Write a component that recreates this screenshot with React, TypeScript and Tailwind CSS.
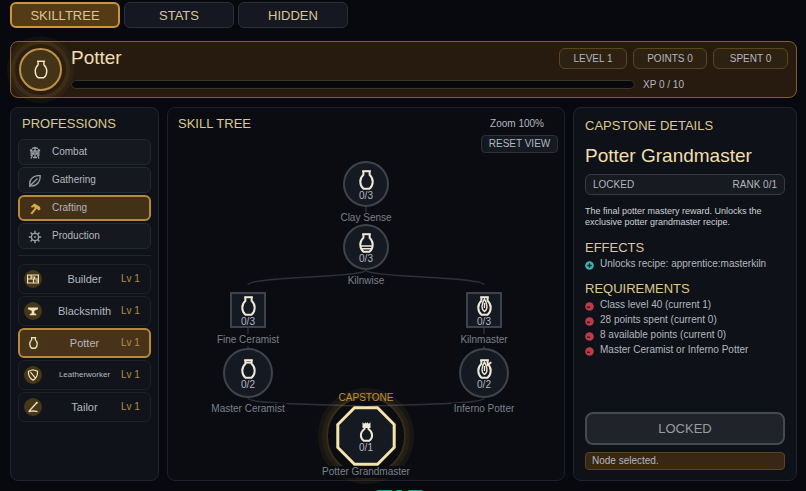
import { useState } from 'react'
import type { ReactNode } from 'react'

type SkillNode = {
  id: string
  name: string
  rank: string
  x: number
  y: number
  size: number
  labelY: number
  shape: 'circle' | 'square' | 'octagon'
  variant: JarVariant
}

type JarVariant = 'plain' | 'band' | 'flame' | 'lid' | 'inferno' | 'crown'

const tabs = ['SKILLTREE', 'STATS', 'HIDDEN']

const categories = ['Combat', 'Gathering', 'Crafting', 'Production']

const jobs = ['Builder', 'Blacksmith', 'Potter', 'Leatherworker', 'Tailor']

const requirements = [
  'Class level 40 (current 1)',
  '28 points spent (current 0)',
  '8 available points (current 0)',
  'Master Ceramist or Inferno Potter'
]

// Positions are relative to the 396x372 tree canvas
const nodes: SkillNode[] = [
  { id: 'clay', name: 'Clay Sense', rank: '0/3', x: 198, y: 76, size: 46, labelY: 110, shape: 'circle', variant: 'plain' },
  { id: 'kiln', name: 'Kilnwise', rank: '0/3', x: 198, y: 139, size: 46, labelY: 173, shape: 'circle', variant: 'band' },
  { id: 'fine', name: 'Fine Ceramist', rank: '0/3', x: 80, y: 202, size: 36, labelY: 232, shape: 'square', variant: 'plain' },
  { id: 'kilnmaster', name: 'Kilnmaster', rank: '0/3', x: 316, y: 202, size: 36, labelY: 232, shape: 'square', variant: 'flame' },
  { id: 'master', name: 'Master Ceramist', rank: '0/2', x: 80, y: 265, size: 50, labelY: 301, shape: 'circle', variant: 'lid' },
  { id: 'inferno', name: 'Inferno Potter', rank: '0/2', x: 316, y: 265, size: 50, labelY: 301, shape: 'circle', variant: 'inferno' },
  { id: 'grand', name: 'Potter Grandmaster', rank: '0/1', x: 198, y: 328, size: 60, labelY: 364, shape: 'octagon', variant: 'crown' }
]

function Jar({ variant = 'plain', className, stroke = 2 }: { variant?: JarVariant; className: string; stroke?: number }) {
  return (
    <svg viewBox="0 0 15 20" className={className} fill="none" stroke="currentColor" strokeWidth={stroke} aria-hidden="true">
      {variant === 'crown' ? (
        <>
          <path d="M3.500 6V.3l1.700 1.500L6.500.3l1 1.300 1-1.300 1.300 1.500L11.500.3V6z" fill="currentColor" stroke="none" />
          <path d="M5.500 5.500v1.500C3 8.700 1.900 11 1.900 13.300c0 2.200 1 4.200 2.800 5.500h5.600c1.800-1.300 2.800-3.300 2.800-5.500 0-2.300-1.100-4.600-3.600-6.300V5.500" />
        </>
      ) : (
        <>
          <path d="M3.200 1.200h8.600" />
          <path d="M4.400 1.200v3.600C2.500 6.500 1.300 9 1.300 11.800c0 3 1.200 5.400 3.200 7h6c2-1.600 3.200-4 3.200-7 0-2.800-1.200-5.300-3.100-7V1.200" />
        </>
      )}
      {variant === 'band' && <path d="M1.500 13h12M2.500 15.800h10" strokeWidth="1.500" />}
      {variant === 'lid' && <path d="M4 3.600h7" />}
      {(variant === 'flame' || variant === 'inferno') && (
        <path d="M7.500 3C5.700 5.800 5 8 5 10.500c0 2.200.9 4 2.500 5 1.600-1 2.500-2.800 2.500-5C10 8 9.300 5.800 7.500 3zM7.500 7v5" strokeWidth="1.400" />
      )}
      {variant === 'inferno' && <path d="M9.800 6.800 14.300 3.200" strokeWidth="1.800" />}
    </svg>
  )
}

const categoryIcons: Record<string, ReactNode> = {
  Combat: (
    <svg viewBox="0 0 14 14" className="size-3.5" fill="none" stroke="currentColor" strokeWidth="1.300" aria-hidden="true">
      <path d="M4 2.700 7 1.500l3 1.200M3.200 3v7M10.800 3v7M3.200 5.200h7.600M7 2v9M4.500 9.200 3 12.500M9.500 9.200l1.500 3.300M5 11.500h4M2 4l1.500 1.500M12 4l-1.500 1.500" />
      <path d="M4 6.300h2.200v2.500H4zM7.800 6.300H10v2.500H7.800z" fill="currentColor" stroke="none" />
    </svg>
  ),
  Gathering: (
    <svg viewBox="0 0 14 14" className="size-3.5" fill="none" stroke="currentColor" strokeWidth="1.300" strokeLinejoin="round" aria-hidden="true">
      <path d="M12.300 1.700C8.800 1.200 5.300 2.500 3.200 5.100 1.700 7 1.400 9.300 2.100 11.700c3 .5 5.900-.3 7.900-2.700 1.700-2 2.300-4.600 2.300-7.300z" />
      <path d="M1.300 12.700 4.300 9.500 9.500 4.500" />
    </svg>
  ),
  Crafting: (
    <svg viewBox="0 0 14 14" className="size-3.5" fill="currentColor" aria-hidden="true">
      <path d="M2.800 4.600 6.300 1.500l1.900 1L12 4.800l.5 2.700-1.800.9L8.800 6.800 4 12.500 2.400 11.300 6.800 5.900 5.700 4.800l-1.700.9z" />
    </svg>
  ),
  Production: (
    <svg viewBox="0 0 14 14" className="size-3.5" fill="none" stroke="currentColor" strokeWidth="1.400" aria-hidden="true">
      <circle cx="7" cy="7" r="3.600" />
      <circle cx="7" cy="7" r=".9" fill="currentColor" stroke="none" />
      <path d="M7 .8v2.600M7 10.600v2.600M.8 7h2.600M10.600 7h2.600M2.600 2.600l1.800 1.800M9.600 9.600l1.800 1.800M11.400 2.600 9.600 4.400M4.400 9.600l-1.800 1.800" />
    </svg>
  )
}

const jobIcons: Record<string, ReactNode> = {
  Builder: (
    <svg viewBox="0 0 12 12" className="size-3" fill="none" stroke="currentColor" strokeWidth="1.200" aria-hidden="true">
      <path d="M.6 2h10.800v8H.6zM.6 6h10.800M4 2v4M7.500 4v2M4 4h4.500M6.500 6v4M8.500 8h3" />
    </svg>
  ),
  Blacksmith: (
    <svg viewBox="0 0 12 12" className="size-3" fill="currentColor" aria-hidden="true">
      <path d="M1 2.500h10v1.800L7.300 5.800v2.400l1.900.8v1.200H2.800V9l1.900-.8V5.800L1 4.300z" />
    </svg>
  ),
  Potter: <Jar className="h-3 w-[9px]" stroke={2.2} />,
  Leatherworker: (
    <svg viewBox="0 0 12 12" className="size-3" fill="none" stroke="currentColor" strokeWidth="1.200" aria-hidden="true">
      <path d="M1.500 2.200 6 .8l4.500 1.400c.3 3.800-.9 6.800-4.500 9.100C2.400 9 1.200 6 1.500 2.200zM3.500 3.200l5 6" />
    </svg>
  ),
  Tailor: (
    <svg viewBox="0 0 12 12" className="size-3" fill="none" stroke="currentColor" strokeWidth="1.300" aria-hidden="true">
      <path d="M9.500 2 2 10.200M1.500 10.600l5-.8 4 .8" />
      <circle cx="9.800" cy="1.800" r="1" fill="currentColor" stroke="none" />
    </svg>
  )
}

function NodeShape({ shape }: { shape: SkillNode['shape'] }) {
  if (shape === 'octagon') {
    return (
      <svg viewBox="0 0 60 60" className="absolute inset-0 size-full" aria-hidden="true">
        <path d="M18.500 1.800h23l16.700 16.700v23L41.500 58.200h-23L1.800 41.500v-23z" fill="#151922" stroke="#f5e3a9" strokeWidth="3" />
      </svg>
    )
  }
  if (shape === 'square') return <span className="absolute inset-0 border-2 border-[#3d424c] bg-[#151922]" />
  return <span className="absolute inset-0 rounded-full border-2 border-[#3f434c] bg-[#151922]" />
}

export default function App() {
  const [tab, setTab] = useState('SKILLTREE')
  const [category, setCategory] = useState('Crafting')
  const [job, setJob] = useState('Potter')

  return (
    <div className="relative flex min-h-screen flex-col overflow-hidden bg-[#07090e] pt-0.5 pr-[9px] pb-2.5 pl-2.5 font-['Liberation_Sans',Arial,sans-serif] text-[10px] leading-3 text-[#b4b7bf]">
      <nav className="flex gap-1">
        {tabs.map(t => (
          <button
            key={t}
            onClick={() => setTab(t)}
            className={`h-[26px] w-[110px] rounded-md pt-0.5 text-[13px] text-[#d8c795] ${
              tab === t ? 'border-2 border-[#c9973a] bg-[#543a15]' : 'border border-[#2b2f38] bg-[#151820]'
            }`}
          >
            {t}
          </button>
        ))}
      </nav>

      {/* Current profession */}
      <header className="relative mt-[13px] flex h-[57px] items-center gap-[9px] rounded-lg border border-[#7d602c] bg-[#271b0f] px-2">
        <div className="flex size-[43px] shrink-0 items-center justify-center rounded-full border-2 border-[#bd9349] bg-[#433317] text-[#f3ead0] shadow-[0_0_0_4px_#2b1e10,0_0_0_8px_#b48c3c1c,0_0_0_12px_#b48c3c10]">
          <Jar className="h-[19px] w-3.5" stroke={1.5} />
        </div>
        <div className="flex-1">
          <div className="flex h-[21px] items-center justify-between">
            <h1 className="-mt-0.5 text-[19px] leading-5 text-[#f0dfb0]">Potter</h1>
            <div className="flex gap-1.5">
              <span className="flex h-[21px] w-[68px] items-center justify-center rounded-md border border-[#5c4620] bg-[#2d2111] pt-px">LEVEL 1</span>
              <span className="flex h-[21px] w-[74px] items-center justify-center rounded-md border border-[#5c4620] bg-[#2d2111] pt-px">POINTS 0</span>
              <span className="flex h-[21px] w-[75px] items-center justify-center rounded-md border border-[#5c4620] bg-[#2d2111] pt-px">SPENT 0</span>
            </div>
          </div>
          <div className="mt-2 flex items-center gap-2">
            <div role="progressbar" aria-label="XP" aria-valuenow={0} aria-valuemax={10} className="h-[9px] flex-1 rounded-full border border-[#38342e] bg-[#08090d]"></div>
            <span className="w-[145px] pt-0.5">XP 0 / 10</span>
          </div>
        </div>
      </header>

      <main className="mt-[9px] flex flex-1 gap-2">
        {/* Professions */}
        <aside className="w-[149px] shrink-0 rounded-lg border border-[#20252f] bg-[#0f1219] px-[7px] pt-2">
          <h2 className="px-1 text-[13px] leading-4 text-[#dcc98f]">PROFESSIONS</h2>
          <div className="mt-[7px] flex flex-col gap-0.5">
            {categories.map(c => (
              <button
                key={c}
                onClick={() => setCategory(c)}
                className={`flex h-[26px] items-center gap-2.5 rounded-md text-left ${
                  category === c ? 'border-2 border-[#b78a3b] bg-[#423017] px-2' : 'border border-[#23272f] bg-[#16181f] px-[9px]'
                }`}
              >
                <span className={`flex w-3.5 justify-center pt-0.5 ${category === c ? 'text-[#dba446]' : 'text-[#9a9fa8]'}`}>{categoryIcons[c]}</span>
                {c}
              </button>
            ))}
          </div>
          <hr className="mt-1.5 border-[#20242c]" />
          <div className="mt-2 flex flex-col gap-0.5">
            {jobs.map(j => (
              <button
                key={j}
                onClick={() => setJob(j)}
                className={`flex h-[30px] items-center rounded-md ${
                  job === j ? 'border-2 border-[#b78a3b] bg-[#48331a] px-1' : 'border border-[#1d212a] bg-[#11141b] px-[5px]'
                }`}
              >
                <span className="flex size-[18px] items-center justify-center rounded-full bg-[#463719] text-[#f0e3bd]">{jobIcons[j]}</span>
                <span className={`flex-1 pl-3.5 ${j.length > 10 ? 'text-[8px]' : 'text-[11px]'}`}>{j}</span>
                <span className="w-8 pl-2 text-left whitespace-nowrap text-[#b58c45]">Lv 1</span>
              </button>
            ))}
          </div>
        </aside>

        {/* Skill tree */}
        <section className="relative min-w-0 flex-1 rounded-lg border border-[#1c212b] bg-[#0a0c11] px-2.5 pt-2">
          <div className="flex justify-between">
            <h2 className="text-[13px] leading-4 text-[#dcc98f]">SKILL TREE</h2>
            <span className="pr-2.5 leading-4">Zoom 100%</span>
          </div>
          <button className="relative z-10 mt-[3px] -mr-1 ml-auto block h-[18px] w-[77px] rounded border border-[#2b303a] bg-[#151921]">RESET VIEW</button>

          <div className="absolute top-0 left-1/2 h-[372px] w-[396px] -translate-x-1/2">
            <svg viewBox="0 0 396 372" className="absolute inset-0 size-full overflow-visible" fill="none" aria-hidden="true">
              <g stroke="#2d3037" strokeWidth="1.500">
                <path d="M198 99v17M80 220v20M316 220v20" />
                <path d="M198 162C198 170 80 168 80 177M198 162C198 170 316 168 316 177" />
                <path d="M80 290C80 298 198 296 198 299M316 290C316 298 198 296 198 299" />
              </g>
              <g stroke="#d6a136">
                <circle cx="198" cy="328" r="39" strokeWidth="2" opacity=".22" />
                <circle cx="198" cy="328" r="42" strokeWidth="4" opacity=".13" />
                <circle cx="198" cy="328" r="46" strokeWidth="4" opacity=".07" />
              </g>
            </svg>
            {nodes.map(n => (
              <div key={n.id}>
                <button
                  aria-label={n.name}
                  className="absolute -translate-x-1/2 -translate-y-1/2"
                  style={{ left: n.x, top: n.y, width: n.size, height: n.size }}
                >
                  <NodeShape shape={n.shape} />
                </button>
                <div
                  className="pointer-events-none absolute flex w-10 -translate-x-1/2 flex-col items-center text-[#efe9da]"
                  style={{ left: n.x, top: n.y - 14 }}
                >
                  <Jar variant={n.variant} className="h-5 w-[15px]" />
                  <span className="text-[#b4b7bf]">{n.rank}</span>
                </div>
                <span
                  className="absolute -translate-x-1/2 -translate-y-1/2 bg-[#0a0c11] px-0.5 whitespace-nowrap text-[#7c8089]"
                  style={{ left: n.x, top: n.labelY }}
                >
                  {n.name}
                </span>
              </div>
            ))}
            <span className="absolute top-[284px] left-[198px] -translate-x-1/2 text-[#c08f35]">CAPSTONE</span>
          </div>
        </section>

        {/* Details of the selected node */}
        <aside className="flex w-[224px] shrink-0 flex-col rounded-lg border border-[#20252f] bg-[#0e1118] px-[11px] pt-2.5 pb-2.5">
          <h2 className="text-[13px] leading-4 text-[#dcc98f]">CAPSTONE DETAILS</h2>
          <h3 className="mt-2.5 text-[19px] leading-6 text-[#f0dfb0]">Potter Grandmaster</h3>
          <div className="mt-1.5 flex h-[21px] items-center justify-between rounded-md border border-[#363b45] bg-[#171a21] px-[7px]">
            <span>LOCKED</span>
            <span>RANK 0/1</span>
          </div>
          <p className="mt-[11px] text-[9px] leading-[11px] text-[#cfd1d6]">The final potter mastery reward. Unlocks the exclusive potter grandmaster recipe.</p>
          <h4 className="mt-3 text-[13px] leading-4 text-[#dcc98f]">EFFECTS</h4>
          <ul>
            <li className="flex h-[15px] items-center gap-1.5">
              <svg viewBox="0 0 9 9" className="mt-1 size-[9px] shrink-0" aria-hidden="true">
                <circle cx="4.500" cy="4.500" r="4.300" fill="#3fb3ae" />
                <path d="M4.500 2.300v4.400M2.300 4.500h4.400" stroke="#0d2a30" strokeWidth="1.400" />
              </svg>
              Unlocks recipe: apprentice:masterkiln
            </li>
          </ul>
          <h4 className="mt-2.5 text-[13px] leading-4 text-[#dcc98f]">REQUIREMENTS</h4>
          <ul>
            {requirements.map(r => (
              <li key={r} className="flex h-[15px] items-center gap-1.5">
                <svg viewBox="0 0 9 9" className="mt-1 size-[9px] shrink-0" aria-hidden="true">
                  <circle cx="4.500" cy="4.500" r="4.300" fill="#bb3c48" />
                  <path d="M2 5.200h3" stroke="#3a1118" strokeWidth="1.300" />
                </svg>
                {r}
              </li>
            ))}
          </ul>
          <button className="mt-auto h-[33px] shrink-0 rounded-lg border-2 border-[#454951] bg-[#20232a] text-[13px] text-[#9a9ca2]">LOCKED</button>
          <p role="status" className="mt-[7px] flex h-[18px] shrink-0 items-center rounded border border-[#5a431f] bg-[#372714] px-1.5">Node selected.</p>
        </aside>
      </main>

      {/* Top edge of the HUD marker peeking in below the panels */}
      <svg viewBox="0 0 48 2" className="absolute bottom-0 left-1/2 h-0.5 w-12 -translate-x-[27px]" aria-hidden="true">
        <path d="M2 1h14v1H0zM21 1h5v1h-6zM33 1h14l-1 1H32z" fill="#12a583" />
      </svg>
    </div>
  )
}
